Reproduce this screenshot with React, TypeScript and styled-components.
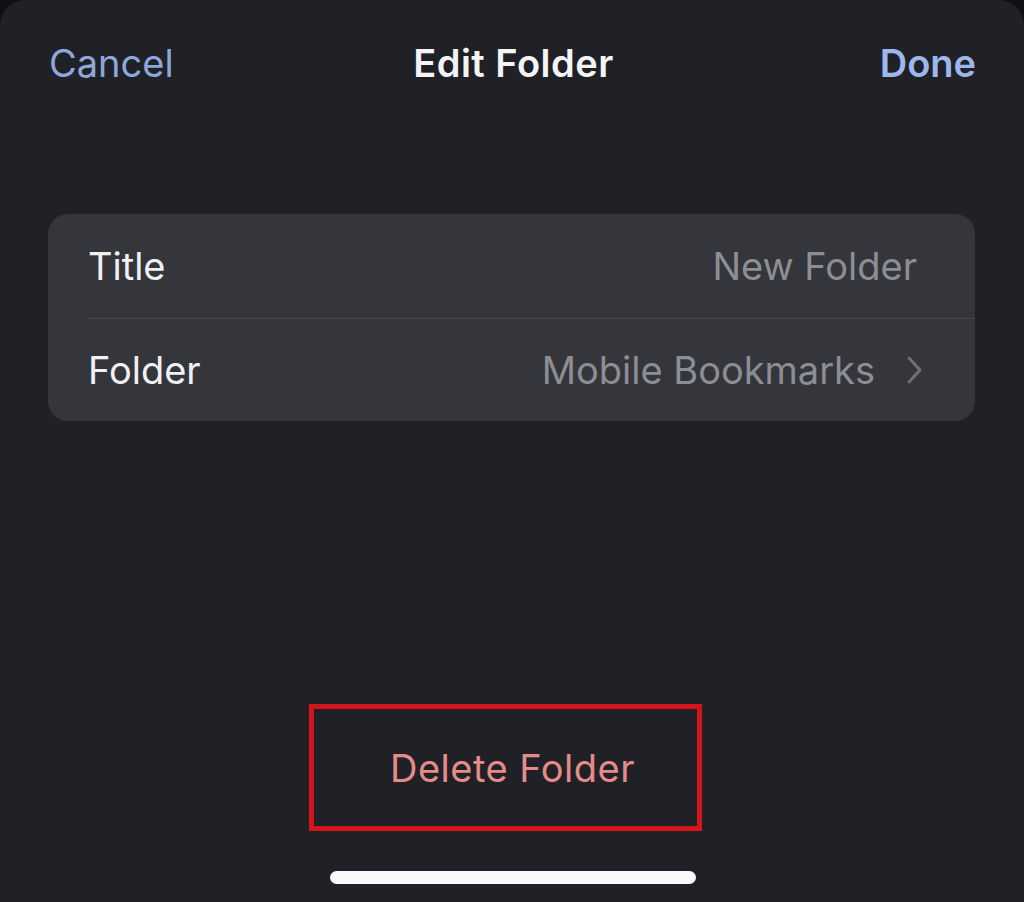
import React from "react"
import styled, { createGlobalStyle } from "styled-components"

const GlobalStyle = createGlobalStyle`
    html, body {
        margin: 0;
        padding: 0;
        background: #0f1013;
    }
    * {
        box-sizing: border-box;
    }
`

const Sheet = styled.div`
    width: 1024px;
    height: 902px;
    overflow: hidden;
    display: flex;
    flex-direction: column;
    background: #1f2126;
    border-radius: 26px 26px 0 0;
    font-family: Inter, "Noto Sans", "Liberation Sans", sans-serif;
`
const NavBar = styled.div`
    display: grid;
    grid-template-columns: 1fr auto 1fr;
    align-items: center;
    height: 72px;
    margin-top: 27px;
    padding: 0 48px 0 49px;
`
const NavButton = styled.span<{ $align: "left" | "right"; $bold?: boolean }>`
    justify-self: ${p => (p.$align === "left" ? "start" : "end")};
    font-size: 38px;
    font-weight: ${p => (p.$bold ? 600 : 400)};
    color: ${p => (p.$bold ? "#9db6ec" : "#8ea8dc")};
`
const NavTitle = styled.span`
    font-size: 38px;
    font-weight: 600;
    color: #f4f4f6;
    letter-spacing: 0.5px;
    margin-left: 2px;
`
const Card = styled.div`
    margin: 115px 49px 0 48px;
    background: #34363c;
    border-radius: 20px;
    overflow: hidden;
`
const Row = styled.div<{ $divider?: boolean }>`
    display: flex;
    align-items: center;
    height: ${p => (p.$divider ? "105px" : "102px")};
    margin-left: 40px;
    padding-right: 58px;
    border-bottom: ${p => (p.$divider ? "1.5px solid #45474d" : "none")};
`
const Label = styled.span`
    flex: 1;
    font-size: 38px;
    color: #f1f1f3;
`
const Value = styled.span`
    font-size: 38px;
    color: #8d8e93;
`
const Chevron = styled.svg`
    width: 20px;
    height: 30px;
    margin-left: 30px;
    margin-right: -8px;
`
const Spacer = styled.div`
    flex: 1;
`
const DeleteArea = styled.div`
    align-self: flex-start;
    margin-left: 309px;
    width: 393px;
    height: 127px;
    border: 5px solid #d3141b;
    display: flex;
    align-items: center;
    justify-content: center;
`
const DeleteText = styled.span`
    font-size: 38px;
    color: #e68b87;
    letter-spacing: 0.5px;
    margin-left: 14px;
`
const HomeIndicator = styled.div`
    width: 366px;
    height: 13px;
    margin: 40px 0 18px 330px;
    border-radius: 7px;
    background: #fafafa;
`

const App = () => {
    return (
        <>
            <GlobalStyle />
            <Sheet>
                <NavBar>
                    <NavButton $align="left">Cancel</NavButton>
                    <NavTitle>Edit Folder</NavTitle>
                    <NavButton $align="right" $bold>Done</NavButton>
                </NavBar>
                <Card>
                    <Row $divider>
                        <Label>Title</Label>
                        <Value>New Folder</Value>
                    </Row>
                    <Row>
                        <Label>Folder</Label>
                        <Value>Mobile Bookmarks</Value>
                        <Chevron viewBox="0 0 20 30">
                            <path d="M4 3 L15 15 L4 27" fill="none" stroke="#6e7075" strokeWidth="3" strokeLinecap="round" strokeLinejoin="round" />
                        </Chevron>
                    </Row>
                </Card>
                <Spacer />
                <DeleteArea>
                    <DeleteText>Delete Folder</DeleteText>
                </DeleteArea>
                <HomeIndicator />
            </Sheet>
        </>
    )
}

export default App
